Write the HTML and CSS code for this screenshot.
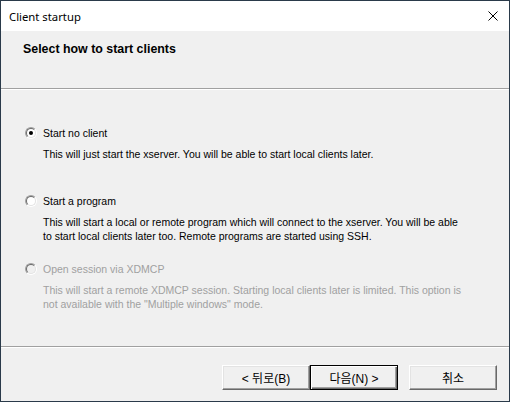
FILE: index.html
```html
<!DOCTYPE html>
<html lang="en">
<head>
<meta charset="utf-8" />
<title>Client startup</title>
<link rel="stylesheet" href="styles.css">
</head>
<body>
  <div class="window" role="dialog" aria-label="Client startup">
    <div class="titlebar">
      <span class="title">Client startup</span>
      <span class="close" aria-label="Close">
        <svg width="10" height="10" viewBox="0 0 10 10"><path d="M0.5 0.5L9.5 9.5M9.5 0.5L0.5 9.5" stroke="#000" stroke-width="1" fill="none"/></svg>
      </span>
    </div>
    <div class="header">
      <h1>Select how to start clients</h1>
    </div>
    <div class="content">
      <div class="option">
        <label class="opt-label"><span class="radio checked"></span>Start no client</label>
        <p class="opt-desc">This will just start the xserver. You will be able to start local clients later.</p>
      </div>
      <div class="option">
        <label class="opt-label"><span class="radio"></span>Start a program</label>
        <p class="opt-desc">This will start a local or remote program which will connect to the xserver. You will be able<br>to start local clients later too. Remote programs are started using SSH.</p>
      </div>
      <div class="option disabled">
        <label class="opt-label"><span class="radio"></span>Open session via XDMCP</label>
        <p class="opt-desc">This will start a remote XDMCP session. Starting local clients later is limited. This option is<br>not available with the "Multiple windows" mode.</p>
      </div>
    </div>
    <div class="footer">
      <button class="btn">&lt; 뒤로(B)</button>
      <button class="btn default">다음(N) &gt;</button>
      <button class="btn cancel">취소</button>
    </div>
  </div>
</body>
</html>
```
FILE: styles.css
```css
html, body {
  margin: 0;
  padding: 0;
  background: #1f2d3a;
}
.window {
  width: 510px;
  height: 402px;
  box-sizing: border-box;
  border: 1px solid #2a3a4a;
  background: #f0f0f0;
  display: flex;
  flex-direction: column;
  font-family: "Liberation Sans", "Noto Sans CJK KR", sans-serif;
  font-size: 10.5px;
  color: #000;
}
.titlebar {
  height: 30px;
  background: #fff;
  display: flex;
  align-items: center;
  justify-content: space-between;
  padding: 0 11px 0 8px;
}
.title {
  font-family: "Noto Sans", sans-serif;
  font-size: 11.3px;
  color: #000;
}
.close {
  display: flex;
  width: 10px;
  height: 10px;
}
.header {
  height: 58px;
  border-bottom: 1px solid #a0a0a0;
  box-shadow: 0 1px 0 #fff;
  padding: 11px 0 0 22px;
  box-sizing: border-box;
}
h1 {
  margin: 0;
  font-size: 12.4px;
  font-weight: bold;
  line-height: 14px;
}
.content {
  flex: 1;
  padding: 37px 0 0 24px;
  border-bottom: 1px solid #a0a0a0;
  box-shadow: 0 1px 0 #fff;
}
.option {
  height: 68px;
}
.opt-label {
  display: flex;
  align-items: center;
  gap: 6px;
  height: 14px;
  line-height: 14px;
}
.opt-desc {
  margin: 7px 0 0 18px;
  line-height: 14px;
}
.disabled {
  color: #a0a0a0;
}
.radio {
  position: relative;
  width: 12px;
  height: 12px;
  box-sizing: border-box;
  border-radius: 50%;
  border: 1px solid;
  border-color: #a0a0a0 #fff #fff #a0a0a0;
}
.radio::before {
  content: "";
  position: absolute;
  inset: 0;
  border-radius: 50%;
  border: 1px solid;
  border-color: #696969 #e3e3e3 #e3e3e3 #696969;
  background: #fff;
}
.disabled .radio::before {
  background: #f0f0f0;
}
.radio.checked::after {
  content: "";
  position: absolute;
  left: 3px;
  top: 3px;
  width: 4px;
  height: 4px;
  border-radius: 50%;
  background: #000;
}
.footer {
  height: 54px;
  display: flex;
  align-items: flex-start;
  padding: 18px 12px 0 0;
  box-sizing: border-box;
  justify-content: flex-end;
}
.btn {
  width: 88px;
  height: 25px;
  box-sizing: border-box;
  background: #f0f0f0;
  border: 1px solid;
  border-color: #fff #696969 #696969 #fff;
  box-shadow: inset -1px -1px #a0a0a0, inset 1px 1px #e3e3e3;
  font-family: "Liberation Sans", "Noto Sans CJK KR", sans-serif;
  font-size: 12px;
  color: #000;
  padding: 0;
}
.btn.default {
  border: 1px solid #000;
  box-shadow: inset 1px 1px #fff, inset -1px -1px #696969, inset -2px -2px #a0a0a0;
}
.btn.cancel {
  margin-left: 11px;
}
```
